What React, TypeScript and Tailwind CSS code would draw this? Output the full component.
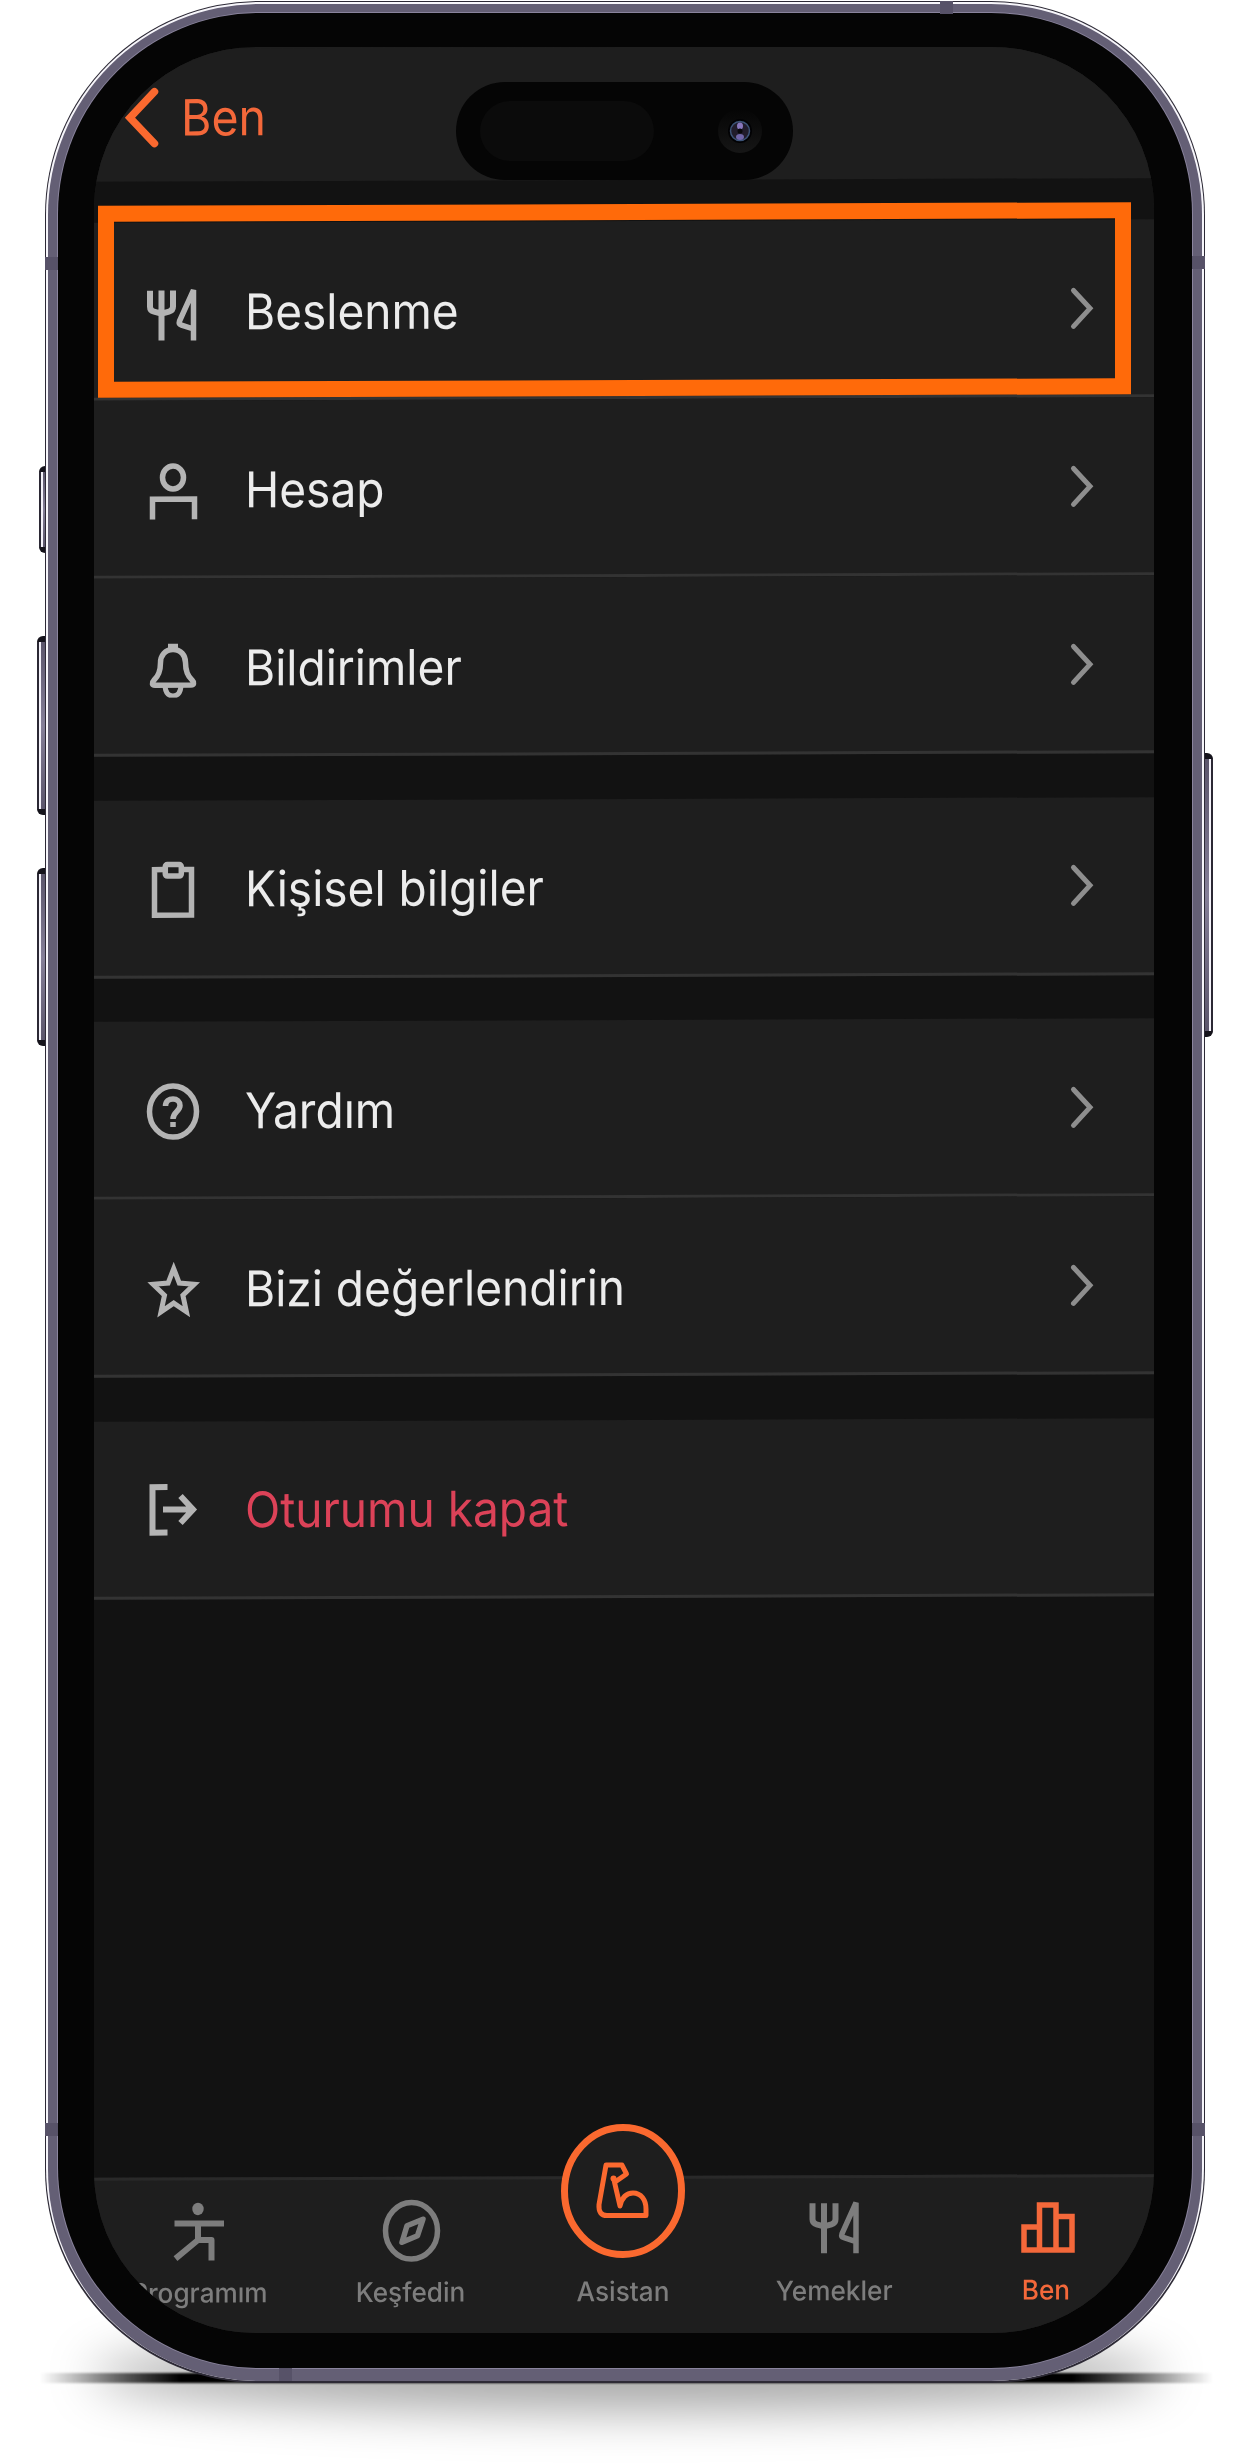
import React from 'react';
import { clsx } from 'clsx';

interface IconProps {
  className?: string;
}

const CutleryIcon: React.FC<IconProps> = ({ className }) => (
  <svg viewBox="0 0 60 60" className={className} fill="none" stroke="currentColor" strokeWidth="6">
    <path d="M7 9v16q0 4 4 5l7.5 2 7.5-2q4-1 4-5V9M18.5 9v50" />
    <path d="M50.5 59V8.5L36.5 39.5q-1 3 2 4l12 4" strokeWidth="5.5" />
  </svg>
);

const AccountIcon: React.FC<IconProps> = ({ className }) => (
  <svg viewBox="0 0 60 60" className={className} fill="none" stroke="currentColor" strokeWidth="5.5">
    <ellipse cx="30" cy="18" rx="10.5" ry="11.5" />
    <path d="M9.5 60V39.5h42V60" />
  </svg>
);

const BellIcon: React.FC<IconProps> = ({ className }) => (
  <svg viewBox="0 0 60 60" className={className} fill="none" stroke="currentColor" strokeWidth="5.5">
    <path d="M25 9h10" />
    <path
      d="M30 12c-8 0-12.5 6-12.5 13 0 9-2 13.5-6.5 17.5-2.5 2.5-2 5 1 5h36c3 0 3.5-2.5 1-5-4.5-4-6.500-8.500-6.500-17.500 0-7-4.500-13-12.500-13z"
      strokeLinejoin="round"
    />
    <path d="M22 49q1 9.500 8 9.500t8-9.500" strokeWidth="5" />
  </svg>
);

const ClipboardIcon: React.FC<IconProps> = ({ className }) => (
  <svg viewBox="0 0 60 60" className={className} fill="none" stroke="currentColor" strokeWidth="5.5">
    <path d="M21 11h-9.5v45.500h37V11H39" />
    <rect x="22.3" y="6" width="16" height="11.5" rx="2" />
  </svg>
);

const HelpIcon: React.FC<IconProps> = ({ className }) => (
  <svg viewBox="0 0 60 60" className={className} fill="none" stroke="currentColor" strokeWidth="5.5">
    <ellipse cx="30" cy="31" rx="23.5" ry="25.5" />
    <path d="M22.5 25.500c0-5 3.500-7 7.500-7s7 2.500 7 6.500c0 6-7 6-7 13.500" />
    <path d="M30 41.500v5" />
  </svg>
);

const StarIcon: React.FC<IconProps> = ({ className }) => (
  <svg viewBox="0 0 60 60" className={className} fill="none" stroke="currentColor" strokeWidth="5">
    <path d="M30.700 10l5.600 14.500 15 1.200-11.400 11 3.500 16.500-12.700-8.700L18 53.200l3.500-16.500-11.400-11 15-1.200z" />
  </svg>
);

const SignOutIcon: React.FC<IconProps> = ({ className }) => (
  <svg viewBox="0 0 60 60" className={className} fill="none" stroke="currentColor" strokeWidth="6">
    <path d="M24.5 7.500h-15v45.500h15" />
    <path d="M20 30h30M37.500 16.500L50 30 37.500 43.500" />
  </svg>
);

const ChevronRight: React.FC<IconProps> = ({ className }) => (
  <svg viewBox="0 0 26 44" className={className} fill="none" stroke="currentColor" strokeWidth="5" strokeLinecap="round">
    <path d="M4.5 4L21 22 4.500 40" />
  </svg>
);

const ProgramIcon: React.FC<IconProps> = ({ className }) => (
  <svg viewBox="0 0 64 70" className={className} fill="none" stroke="currentColor" strokeWidth="6">
    <ellipse cx="30" cy="13.5" rx="5.7" ry="6.2" fill="currentColor" stroke="none" />
    <path d="M6.5 28h49.500M30 28v16.500h13.500V65M30 44.500L7.500 63" strokeLinejoin="round" />
  </svg>
);

const CompassIcon: React.FC<IconProps> = ({ className }) => (
  <svg viewBox="0 0 64 70" className={className} fill="none" stroke="currentColor" strokeWidth="5.5" strokeLinejoin="round">
    <ellipse cx="31.5" cy="36" rx="26" ry="28.3" />
    <path d="M43 24.500L27 31l-5 16.500L37.500 41z" />
  </svg>
);

const MealsIcon: React.FC<IconProps> = ({ className }) => (
  <svg viewBox="-2.5 -1 64 70" className={className} fill="none" stroke="currentColor" strokeWidth="6">
    <path d="M7 9v16q0 4 4 5l7.5 2 7.5-2q4-1 4-5V9M18.5 9v50" />
    <path d="M50.5 59V8.5L36.5 39.5q-1 3 2 4l12 4" strokeWidth="5.5" />
  </svg>
);

const StatsIcon: React.FC<IconProps> = ({ className }) => (
  <svg viewBox="0 0 64 70" className={className} fill="none" stroke="currentColor" strokeWidth="5.5">
    <path d="M9 57.500v-23h15.500v23zM24.500 57.500v-45h16.500v45zM41 57.500V24h16v33.500z" />
  </svg>
);

const AssistantIcon: React.FC<IconProps> = ({ className }) => (
  <svg viewBox="0 0 124 134" className={className} fill="none" stroke="currentColor">
    <ellipse cx="62" cy="67" rx="58.5" ry="63.5" fill="#1e1e1e" strokeWidth="7" />
    <path
      d="M53 56l6 26c2-9 7-13 13-13 8 0 13 7 13 16v6.500H46c-6 0-8.500-4-8-11L45 41h16l4.500 9-11.500 8"
      strokeWidth="5"
      strokeLinejoin="round"
      strokeLinecap="round"
    />
    <circle cx="52.5" cy="54.5" r="3" fill="currentColor" stroke="none" />
  </svg>
);

interface MenuItem {
  label: string;
  icon: React.FC<IconProps>;
  danger?: boolean;
}

const menuGroups: MenuItem[][] = [
  [
    { label: 'Beslenme', icon: CutleryIcon },
    { label: 'Hesap', icon: AccountIcon },
    { label: 'Bildirimler', icon: BellIcon }
  ],
  [{ label: 'Kişisel bilgiler', icon: ClipboardIcon }],
  [
    { label: 'Yardım', icon: HelpIcon },
    { label: 'Bizi değerlendirin', icon: StarIcon }
  ],
  [{ label: 'Oturumu kapat', icon: SignOutIcon, danger: true }]
];

const MenuRow: React.FC<{ item: MenuItem }> = ({ item }) => {
  const Icon = item.icon;

  return (
    <div className="flex h-[178px] items-center border-b-[3px] border-[#333333] bg-[#1e1e1e] pt-[2px] pr-[59px] pl-[49px]">
      <Icon className="size-[60px] shrink-0 text-[#b4b4b4]" />
      <span
        className={clsx(
          'mt-px ml-[42px] origin-left scale-x-[0.94] text-[49px] leading-none whitespace-nowrap',
          item.danger ? 'text-[#dc4258]' : 'text-[#ececec]'
        )}
      >
        {item.label}
      </span>
      {!item.danger && <ChevronRight className="ml-auto h-11 w-[26px] text-[#8e8e8e]" />}
    </div>
  );
};

const tabs = [
  { label: 'Programım', icon: ProgramIcon },
  { label: 'Keşfedin', icon: CompassIcon },
  { label: 'Asistan', icon: null },
  { label: 'Yemekler', icon: MealsIcon },
  { label: 'Ben', icon: StatsIcon, active: true }
];

const TabBar: React.FC = () => (
  <nav className="grid h-[161px] grid-cols-5 border-t-[3px] border-[#292929] bg-[#1e1e1e] pr-px">
    {tabs.map(({ label, icon: Icon, active }) => (
      <div
        key={label}
        className={clsx('flex flex-col items-center', active ? 'text-[#f4683a]' : 'text-[#7d7d7d]')}
      >
        {Icon ? (
          <Icon className="mt-[15px] h-[70px] w-16 shrink-0" />
        ) : (
          <AssistantIcon className="-mt-[55px] mb-[6px] h-[134px] w-[124px] shrink-0 text-[#fb692f]" />
        )}
        <span className="mt-[11px] scale-x-[0.97] pr-[2px] text-[27px] leading-[34px] font-medium whitespace-nowrap">
          {label}
        </span>
      </div>
    ))}
  </nav>
);

const DynamicIsland: React.FC = () => (
  <div className="absolute inset-x-0 top-[35px] mx-auto flex h-[98px] w-[337px] items-center justify-between rounded-[49px] bg-[#050505] pr-[31px] pl-6">
    <div className="h-[60px] w-[174px] rounded-[30px] bg-[#0b0b0b]" />
    <svg viewBox="0 0 44 44" className="size-11">
      <defs>
        <linearGradient id="lens-rim" x1="0" y1="0" x2="0" y2="1">
          <stop offset="0" stopColor="#050505" />
          <stop offset="1" stopColor="#161616" />
        </linearGradient>
      </defs>
      <circle cx="22" cy="22" r="22" fill="url(#lens-rim)" />
      <circle cx="22" cy="22" r="12" fill="#020204" />
      <circle cx="22" cy="22" r="9.5" fill="#211c2b" stroke="#3c5376" strokeWidth="1.5" />
      <ellipse cx="22" cy="17" rx="3" ry="3.5" fill="#8877bd" />
      <ellipse cx="22" cy="28" rx="4" ry="3" fill="#6f65a8" />
      <circle cx="22" cy="22" r="2.5" fill="#08080c" />
    </svg>
  </div>
);

const Screen: React.FC = () => (
  <div className="relative h-full overflow-hidden rounded-[162px] bg-[#1e1e1e]">
    <div className="flex h-[2290px] -skew-y-[0.2deg] flex-col">
      <header className="flex h-[133px] shrink-0 items-center bg-[#1e1e1e] pt-[5px] pl-[30px] text-[#f4683a]">
        <svg
          viewBox="0 0 36 62"
          className="h-[62px] w-9"
          fill="none"
          stroke="#fb692f"
          strokeWidth="7.5"
          strokeLinecap="round"
        >
          <path d="M30.5 5L6 31l24.500 26" />
        </svg>
        <span className="ml-[21px] origin-left scale-x-[0.93] text-[50px] leading-none">Ben</span>
      </header>
      <main className="flex flex-1 flex-col gap-[43.5px] bg-[#121212] pt-[41px]">
        {menuGroups.map((group) => (
          <section key={group[0].label}>
            {group.map((item) => (
              <MenuRow key={item.label} item={item} />
            ))}
          </section>
        ))}
      </main>
      <TabBar />
      {/* highlight around the first menu entry */}
      <div className="absolute top-[157px] left-1 h-48 w-[1033px] border-[16px] border-[#ff6a0a]" />
    </div>
    <DynamicIsland />
  </div>
);

const SideButton: React.FC<{ className: string; right?: boolean }> = ({ className, right }) => (
  <div
    className={clsx(
      'border-y-[6px] border-[#15131b] bg-linear-to-b from-[#5c566c] via-[#857f98] to-[#5c566c]',
      right
        ? 'rounded-r-md shadow-[inset_-2px_0_0_#2b2834,inset_-4px_0_0_#f4f2fa]'
        : 'rounded-l-md shadow-[inset_2px_0_0_#2b2834,inset_4px_0_0_#f4f2fa]',
      className
    )}
  />
);

const band = 'absolute size-[13px] bg-[#575268]';

const App: React.FC = () => (
  <div className="relative h-[2464px] w-[1253px] overflow-hidden bg-white font-['Inter',sans-serif]">
    {/* floor shadow */}
    <div className="absolute inset-x-[90px] bottom-[54px] h-[70px] rounded-[50%] bg-black/35 blur-[24px]" />
    <div className="absolute inset-x-10 bottom-[81px] h-[10px] bg-[linear-gradient(90deg,transparent,#000_12%,#000_88%,transparent)] blur-[1px]" />

    <div className="flex items-start pt-px">
      <div className="flex w-[45px] flex-col items-end pt-[465px]">
        <SideButton className="h-[87px] w-[6px]" />
        <SideButton className="mt-[83px] h-[179px] w-2" />
        <SideButton className="mt-[53px] h-[178px] w-2" />
      </div>

      <div className="relative h-[2382px] w-[1160px] rounded-[214px] bg-[#2d2a36] px-px pt-px pb-[2px]">
        <div className="h-full rounded-[213px] bg-[#f7f6fb] px-[2px] pt-[2px]">
          <div className="h-full rounded-[211px] bg-[#645f75] px-[10px] pt-[9px] pb-[13px]">
            <div className="h-full rounded-[201px] bg-[#050505] pt-[34px] pr-[38px] pb-[35px] pl-[36px] shadow-[0_0_0_1px_#8a849d]">
              <Screen />
            </div>
          </div>
        </div>

        {/* antenna bands */}
        <div className={clsx(band, 'top-[256px] left-0')} />
        <div className={clsx(band, 'top-[255px] right-0')} />
        <div className={clsx(band, 'bottom-[247px] left-0')} />
        <div className={clsx(band, 'right-0 bottom-[247px]')} />
        <div className={clsx(band, 'top-0 left-[895px]')} />
        <div className={clsx(band, 'bottom-[2px] left-[234px]')} />
      </div>

      <div className="pt-[752px]">
        <SideButton className="h-[284px] w-2" right />
      </div>
    </div>
  </div>
);

export default App;
